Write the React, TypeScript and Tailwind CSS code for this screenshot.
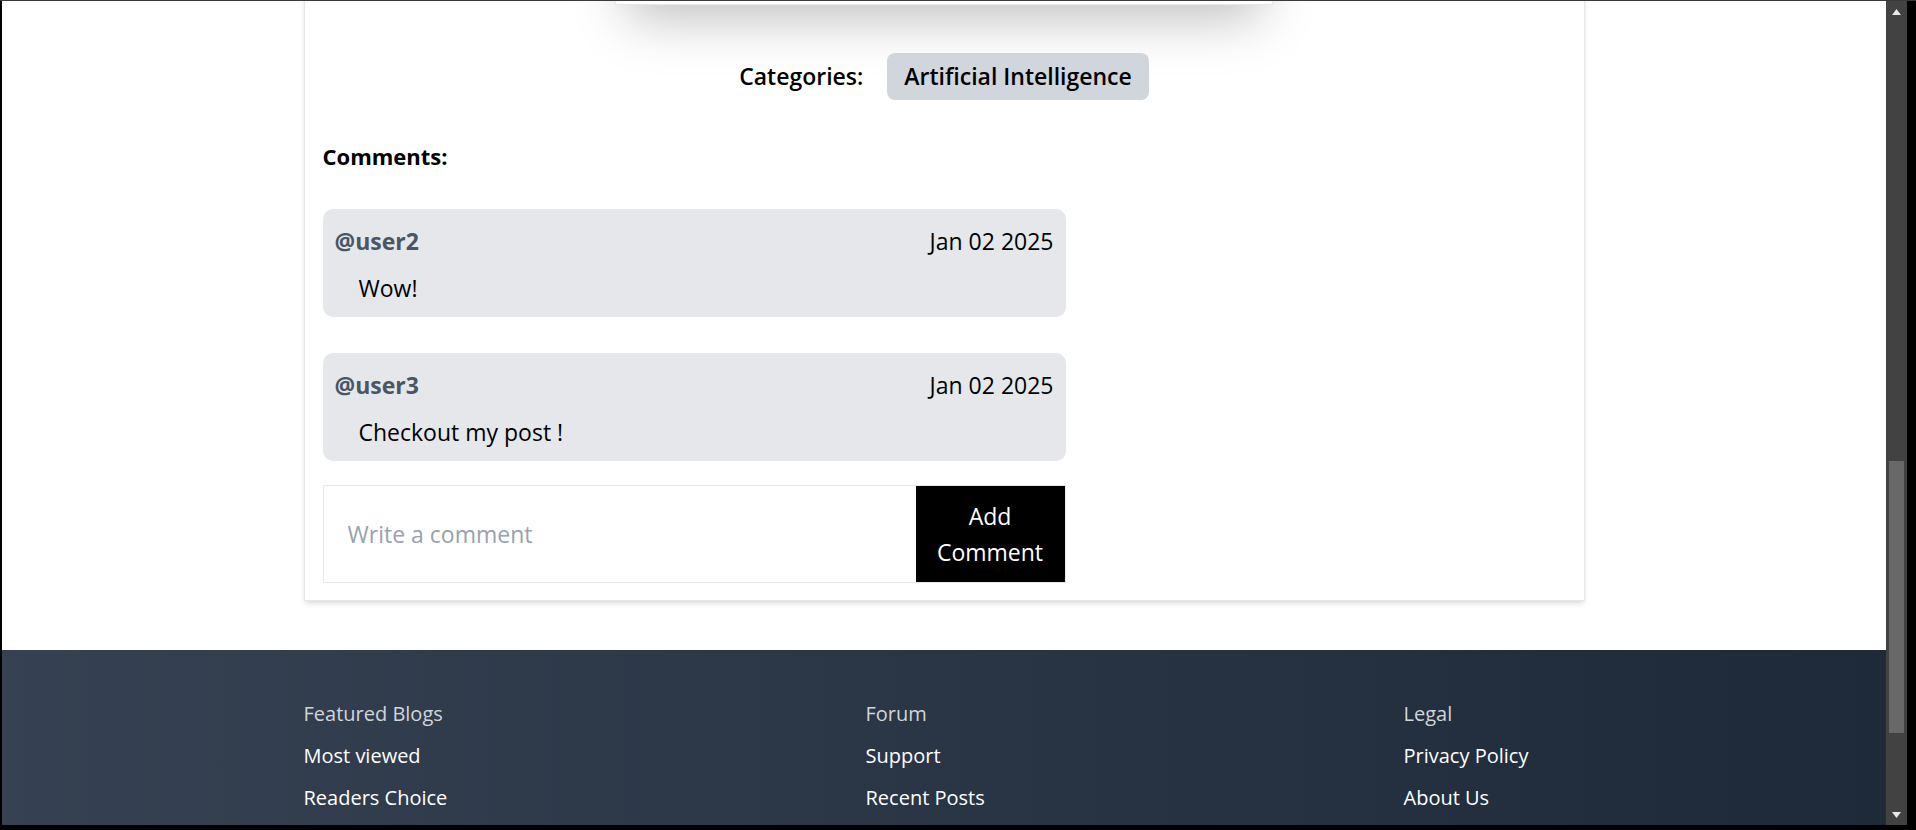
import React from "react";

function ScrollArrow({ dir }: { dir: "up" | "down" }) {
  return (
    <div className="h-[21px] flex items-center justify-center">
      <svg width="9" height="6" viewBox="0 0 9 6">
        {dir === "up" ? (
          <polygon points="4.5,0 9,6 0,6" fill="#e8e8e8" />
        ) : (
          <polygon points="0,0 9,0 4.5,6" fill="#e8e8e8" />
        )}
      </svg>
    </div>
  );
}

function CommentBox({ user, date, text }: { user: string; date: string; text: string }) {
  return (
    <div className="w-[743px] rounded-[10px] bg-gray-200 px-3 pt-[17px] pb-[14px]">
      <div className="flex items-center justify-between h-[30px]">
        <span className="text-[23px] leading-[30px] font-bold text-gray-600">{user}</span>
        <span className="text-[23px] leading-[30px] text-black">{date}</span>
      </div>
      <p className="mt-[17px] pl-6 text-[23px] leading-[30px] text-black">{text}</p>
    </div>
  );
}

export default function App() {
  return (
    <div className="w-[1916px] h-[830px] bg-black flex flex-col overflow-hidden font-['Open_Sans',sans-serif]">
      <div className="h-px shrink-0 bg-[#3a3a3a]" />
      <div className="flex flex-1 min-h-0">
        <div className="w-[2px] shrink-0 bg-black" />
        <main className="w-[1884px] shrink-0 bg-white overflow-hidden">
          <div className="-mt-[300px] flex flex-col">
            <section className="mx-auto w-[1281px] border border-gray-200 bg-white shadow-md px-[18px] pt-5 pb-[17px]">
              <div className="mx-auto w-[658px] h-[283px] border border-gray-200 bg-white shadow-2xl" />
              <div className="mt-[48px] flex items-center justify-center gap-6">
                <span className="text-[23px] font-semibold text-black">Categories:</span>
                <span className="h-[47px] px-[17px] flex items-center rounded-lg bg-gray-300 text-[23px] font-semibold text-black">
                  Artificial Intelligence
                </span>
              </div>
              <h3 className="mt-[41px] text-[22px] leading-[30px] font-bold text-black">Comments:</h3>
              <div className="mt-[38px] flex flex-col gap-9">
                <CommentBox user="@user2" date="Jan 02 2025" text="Wow!" />
                <CommentBox user="@user3" date="Jan 02 2025" text="Checkout my post !" />
              </div>
              <div className="mt-6 w-[743px] h-[98px] border border-gray-200 flex">
                <input
                  className="flex-1 min-w-0 pl-6 bg-transparent outline-none text-[23px] text-black placeholder:text-gray-400"
                  placeholder="Write a comment"
                />
                <button className="w-[149px] shrink-0 bg-black text-white text-[23px] leading-[36px] px-5 flex items-center justify-center text-center">
                  Add Comment
                </button>
              </div>
            </section>
            <footer className="mt-[49px] h-[400px] bg-linear-to-r from-gray-700 to-gray-800 pt-[50px]">
              <div className="mx-auto w-[1281px] grid grid-cols-[562px_538px_1fr] text-[20px] leading-[28px]">
                <div className="flex flex-col gap-[14px]">
                  <span className="text-gray-300">Featured Blogs</span>
                  <span className="text-white">Most viewed</span>
                  <span className="text-white">Readers Choice</span>
                </div>
                <div className="flex flex-col gap-[14px]">
                  <span className="text-gray-300">Forum</span>
                  <span className="text-white">Support</span>
                  <span className="text-white">Recent Posts</span>
                </div>
                <div className="flex flex-col gap-[14px]">
                  <span className="text-gray-300">Legal</span>
                  <span className="text-white">Privacy Policy</span>
                  <span className="text-white">About Us</span>
                </div>
              </div>
            </footer>
          </div>
        </main>
        <div className="w-[21px] shrink-0 bg-[#424242] flex flex-col">
          <ScrollArrow dir="up" />
          <div className="flex-1 px-[3px]">
            <div className="mt-[439px] h-[272px] bg-[#686868]" />
          </div>
          <ScrollArrow dir="down" />
        </div>
        <div className="flex-1 bg-black" />
      </div>
      <div className="h-[5px] shrink-0 bg-black" />
    </div>
  );
}
